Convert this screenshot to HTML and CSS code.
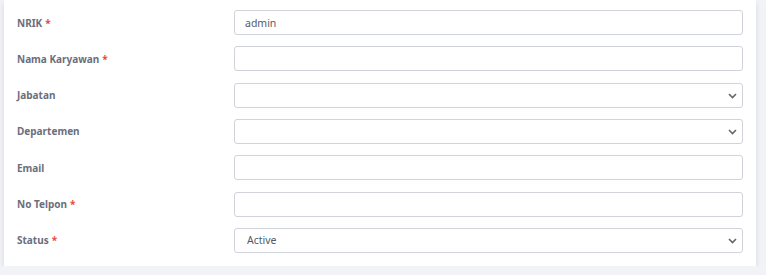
FILE: index.html
```html
<!DOCTYPE html>
<html>
<head>
<meta charset="utf-8">
<link rel="stylesheet" href="styles.css">
</head>
<body>
<div class="card">
  <form class="form">
    <label class="label">NRIK <span class="req">*</span></label>
    <div class="field"><input class="input input-text" type="text" value="admin"></div>

    <label class="label">Nama Karyawan <span class="req">*</span></label>
    <div class="field"><input class="input input-text" type="text"></div>

    <label class="label">Jabatan</label>
    <div class="field"><select class="input select"><option></option></select>
      <svg class="chev" width="9" height="6" viewBox="0 0 9 6"><path d="M1 1l3.5 3.5L8 1" fill="none" stroke="#666" stroke-width="1.6"/></svg></div>

    <label class="label">Departemen</label>
    <div class="field"><select class="input select"><option></option></select>
      <svg class="chev" width="9" height="6" viewBox="0 0 9 6"><path d="M1 1l3.5 3.5L8 1" fill="none" stroke="#666" stroke-width="1.6"/></svg></div>

    <label class="label">Email</label>
    <div class="field"><input class="input input-text" type="text"></div>

    <label class="label">No Telpon <span class="req">*</span></label>
    <div class="field"><input class="input input-text" type="text"></div>

    <label class="label">Status <span class="req">*</span></label>
    <div class="field"><select class="input select"><option>Active</option></select>
      <svg class="chev" width="9" height="6" viewBox="0 0 9 6"><path d="M1 1l3.5 3.5L8 1" fill="none" stroke="#666" stroke-width="1.6"/></svg></div>
  </form>
</div>
</body>
</html>
```

FILE: styles.css
```css
html, body {
  margin: 0;
  padding: 0;
  background: #f2f3f6;
  font-family: "Noto Sans", "Open Sans", sans-serif;
}
.card {
  margin-left: 4px;
  width: 752px;
  height: 266px;
  box-sizing: border-box;
  background: #fff;
  box-shadow: 0 2px 6px rgba(0,0,0,0.10);
  padding: 10px 13px 0 13px;
}
.form {
  display: grid;
  grid-template-columns: 217px 509px;
  grid-auto-rows: 25px;
  row-gap: 11.33px;
}
.label {
  display: flex;
  align-items: center;
  font-size: 10px;
  font-weight: 700;
  color: #6b6e7c;
}
.req {
  color: #e74a3b;
  margin-left: 3px;
}
.field {
  position: relative;
}
.input {
  display: block;
  width: 509px;
  height: 25px;
  box-sizing: border-box;
  border: 1px solid #d1d3da;
  border-radius: 3px;
  background: #fff;
  padding: 0 12px;
  font-family: "Noto Sans", "Open Sans", sans-serif;
  font-size: 10.5px;
  color: #555a66;
  outline: none;
}
.input-text {
  padding-left: 10px;
}
.select {
  appearance: none;
  -webkit-appearance: none;
}
.chev {
  position: absolute;
  right: 6px;
  top: 10px;
  pointer-events: none;
}
```
